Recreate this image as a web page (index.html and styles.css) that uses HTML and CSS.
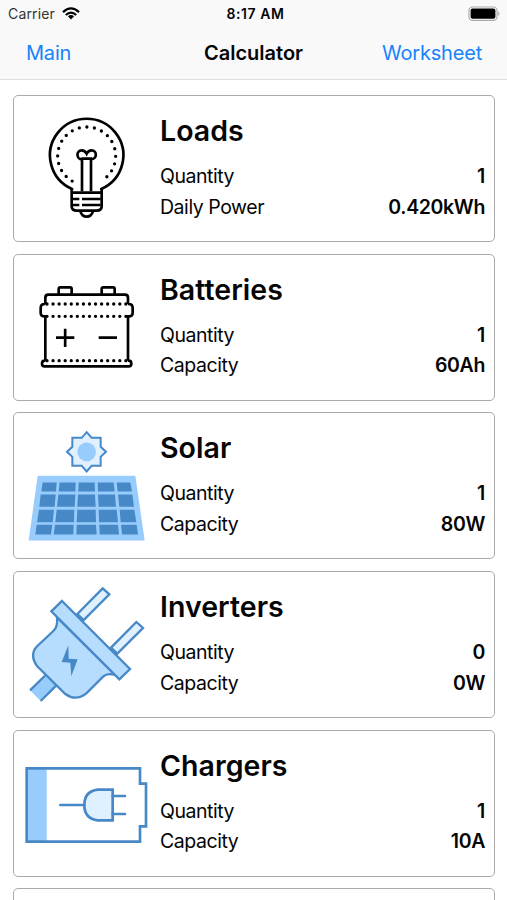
FILE: index.html
```html
<!DOCTYPE html>
<html lang="en">
<head>
<meta charset="utf-8">
<title>Calculator</title>
<link rel="stylesheet" href="styles.css">
</head>
<body>
<header class="top">
  <div class="status">
    <span class="carrier">Carrier
      <svg class="wifi" viewBox="0 0 18 13"><g fill="none" stroke="#000" stroke-width="2.2"><path d="M1 5.1Q9-2.4 17 5.1"/><path d="M3.8 8Q9 3.2 14.2 8"/></g><path d="M5.9 9.3Q9 6.9 12.1 9.3L9 12.4Z"/></svg>
    </span>
    <span class="time">8:17 AM</span>
    <svg class="cell" viewBox="0 0 33 16"><rect x="1" y="1" width="28" height="13.4" rx="3.6" fill="#fff" stroke="#aaa" stroke-width="1.2"/><rect x="2.6" y="2.6" width="24.8" height="10.2" rx="2"/><path d="M30.3 5.5q2.4 2.2 0 4.5z" fill="#999"/></svg>
  </div>
  <nav class="nav">
    <a class="link main">Main</a>
    <h1 class="title">Calculator</h1>
    <a class="link sheet">Worksheet</a>
  </nav>
</header>
<main class="list">
  <section class="card">
    <svg class="icon" viewBox="12 18 405 432" fill="none" stroke="#000" stroke-width="8">
      <path d="M186 300V297A110 110 0 1 1 274 297V300"/>
      <path d="M186.500 273.300A87 87 0 1 1 273.500 273.300" stroke-width="10" stroke-linecap="round" stroke-dasharray="0 22.77"/>
      <path d="M216 304V208C198 208 198 181 215 181Q225 181 230 191Q235 181 245 181C262 181 262 208 243 208V304M214 206H246"/>
      <path d="M185 296V350Q186 362 200 362H260Q274 362 275 350V296M185 308H275"/>
      <path d="M188 327H208M216 327H272M188 345H208M216 345H272"/>
      <path d="M211 364Q216 380 230 380Q244 380 249 364" />
    </svg>
    <div class="info"><h2 class="name">Loads</h2>
      <div class="row"><span>Quantity</span><b>1</b></div>
      <div class="row"><span>Daily Power</span><b>0.420kWh</b></div></div>
  </section>
  <section class="card">
    <svg class="icon" viewBox="12 15 405 432" fill="none" stroke="#000" stroke-width="8">
      <path d="M106 162V143Q106 134 115 134H345Q354 134 354 143V162M106 162H104Q92 162 92 174V188Q92 199 104 199H106V332M354 162H356Q368 162 368 174V188Q368 199 356 199H354V332M106 332H104Q96 332 96 341Q96 349 104 349H356Q364 349 364 341Q364 332 356 332H354"/>
      <path d="M146 133V117Q146 112 151 112H180Q185 112 185 117V133M275 133V117Q275 112 280 112H309Q314 112 314 117V133"/>
      <path d="M111 162H352M111 199H352M111 332H352" stroke-width="10" stroke-linecap="round" stroke-dasharray="0 18.2"/>
      <path d="M138 263H193M165.500 236V291M266 263H321"/>
    </svg>
    <div class="info"><h2 class="name">Batteries</h2>
      <div class="row"><span>Quantity</span><b>1</b></div>
      <div class="row"><span>Capacity</span><b>60Ah</b></div></div>
  </section>
  <section class="card">
    <svg class="icon" viewBox="12 10.500 405 432">
      <path d="M230 68L245 85H272V112L288 127L272 142V169H245L230 186L215 169H187V142L171 127L187 112V85H215Z" fill="#dff0fe" stroke="#4788c7" stroke-width="6"/>
      <circle cx="230" cy="127" r="28" fill="#98ccfd"/>
      <path d="M83 199H376L404 393H56Z" fill="#98ccfd"/>
      <path fill="#4788c7" d="M98 219H140L138 246H94ZM149 219H197L196 246H146ZM206 219H254L255 246H205ZM263 219H311L314 246H264ZM320 219H361L366 246H323ZM92 255H137L134 292H88ZM145 255H196L194 292H141ZM204 255H255L257 292H202ZM264 255H315L318 292H266ZM324 255H367L372 292H328ZM87 301H132L128 338H81ZM140 301H193L192 338H136ZM202 301H257L258 338H200ZM266 301H320L324 338H267ZM329 301H373L379 338H332ZM80 346H127L123 375H76ZM135 346H191L190 375H131ZM200 346H258L260 375H199ZM268 346H324L327 375H269ZM333 346H380L384 375H336Z"/>
    </svg>
    <div class="info"><h2 class="name">Solar</h2>
      <div class="row"><span>Quantity</span><b>1</b></div>
      <div class="row"><span>Capacity</span><b>80W</b></div></div>
  </section>
  <section class="card">
    <svg class="icon" viewBox="12 7 405 432" stroke="#4788c7" stroke-width="7">
      <path d="M202 133L278 56L298 74L221 151ZM303 234L379 157L399 175L322 252Z" fill="#dff0fe"/>
      <path d="M107 316L60 362L92 394L139 347Z" fill="#98ccfd" stroke="none"/>
      <path d="M107 316L60 362M139 347L92 394" fill="none"/>
      <path d="M141 143Q144 171 130 184L82 229Q57 254 81 289L166 373Q198 396 229 371L280 320Q292 309 316 316Z" fill="#b6dcfe"/>
      <path d="M156 94L360 298L328 329L124 125Z" fill="#b6dcfe"/>
      <path d="M175 227L155 277L181 279L184 320L203 269L176 267Z" fill="#4788c7" stroke="none"/>
    </svg>
    <div class="info"><h2 class="name">Inverters</h2>
      <div class="row"><span>Quantity</span><b>0</b></div>
      <div class="row"><span>Capacity</span><b>0W</b></div></div>
  </section>
  <section class="card">
    <svg class="icon" viewBox="12 9 405 432" stroke="#4788c7" stroke-width="8" fill="none">
      <path d="M50 121H110V341H50Z" fill="#98ccfd" stroke="none"/>
      <path d="M50 121H390V167H408V295H390V341H50Z"/>
      <path d="M308 185V277H263Q223 272 223 231Q223 190 263 185Z" fill="#dff0fe"/>
      <path d="M151 231H223M308 204H345M308 258H345" stroke-linecap="round"/>
    </svg>
    <div class="info"><h2 class="name">Chargers</h2>
      <div class="row"><span>Quantity</span><b>1</b></div>
      <div class="row"><span>Capacity</span><b>10A</b></div></div>
  </section>
  <section class="card"></section>
</main>
</body>
</html>
```
FILE: styles.css
```css
* { box-sizing: border-box; }
body { margin: 0; height: 900px; overflow: hidden; background: #fff; color: #050505; font-family: Inter, "Liberation Sans", sans-serif; }
.top { height: 80px; background: #f9f9f9; border-bottom: 1px solid #dedede; }
.status { height: 27px; display: grid; grid-template-columns: 1fr auto 1fr; align-items: center; padding: 1px 6px 0 8px; font-size: 14px; }
.carrier { display: flex; align-items: center; gap: 7px; color: #333; letter-spacing: 0.15px; margin-top: -2px; }
.wifi { width: 18px; height: 13px; }
.time { font-weight: 600; font-size: 14px; letter-spacing: 0.55px; margin: -1px -2px 0 0; }
.cell { width: 33px; height: 16px; justify-self: end; margin-top: -1px; }
.nav { height: 50px; display: grid; grid-template-columns: 1fr auto 1fr; align-items: center; padding: 1px 25px 0; font-size: 20px; }
.link { color: #1683fb; letter-spacing: -0.2px; }
.main { padding-left: 1px; }
.sheet { justify-self: end; }
.title { margin: 0; font-size: 20px; font-weight: 600; }
.list { height: 820px; overflow: hidden; padding: 15px 12px 0 13px; display: flex; flex-direction: column; gap: 11.7px; }
.card { height: 147px; flex: none; display: flex; border: 1px solid #aaa; border-radius: 5px; }
.icon { width: 135px; height: 144px; flex: none; }
.info { flex: 1; padding: 15px 9px 0 11px; }
.name { margin: 0 0 10px; font-size: 28.5px; line-height: 40px; font-weight: 600; letter-spacing: 0.05px; }
.row { display: flex; justify-content: space-between; font-size: 19.5px; line-height: 30.6px; letter-spacing: -0.45px; }
.row b { font-weight: 600; letter-spacing: -0.35px; }
```
